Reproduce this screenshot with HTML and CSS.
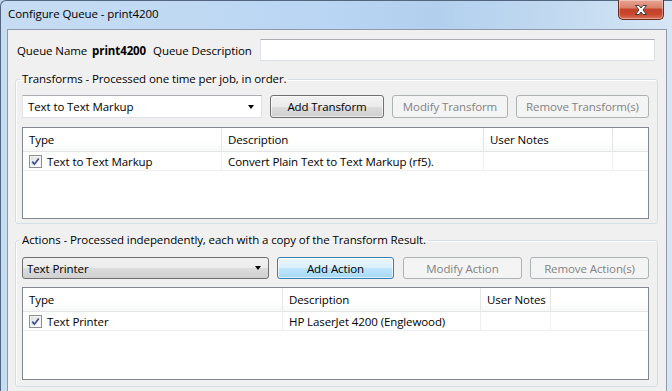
FILE: index.html
```html
<!DOCTYPE html>
<html>
<head>
<meta charset="utf-8">
<title>Configure Queue - print4200</title>
<link rel="stylesheet" href="styles.css">
</head>
<body>
<div class="window">
  <div class="titlebar">
    <span class="title">Configure Queue - print4200</span>
    <div class="close">
      <svg width="18" height="12" viewBox="0 0 18 12"><path d="M3.5 1.5 H7 L9 4 L11 1.5 H14.5 L11 6 L14.5 10.5 H11 L9 8 L7 10.5 H3.5 L7 6 Z" fill="#fff" stroke="#3b3b3b" stroke-width="1" stroke-linejoin="round"/></svg>
    </div>
  </div>
  <div class="client">
    <div class="queue-row">
      <span class="lbl">Queue Name</span>
      <span class="qname">print4200</span>
      <span class="lbl">Queue Description</span>
      <div class="textbox"></div>
    </div>

    <fieldset class="group group-transforms">
      <legend>Transforms - Processed one time per job, in order.</legend>
      <div class="toolbar">
        <div class="combo combo-edit w-t0"><span>Text to Text Markup</span><span class="arrow"></span></div>
        <div class="btn w-t1">Add Transform</div>
        <div class="btn disabled w-t2">Modify Transform</div>
        <div class="btn disabled w-t3">Remove Transform(s)</div>
      </div>
      <div class="list list-t">
        <div class="hcell">Type</div>
        <div class="hcell">Description</div>
        <div class="hcell">User Notes</div>
        <div class="hcell last"></div>
        <div class="cell"><span class="check"><svg width="9" height="9" viewBox="0 0 9 9"><path d="M1.2 4.6 L3.4 7.2 L7.8 1.4" fill="none" stroke="#3b4f94" stroke-width="1.7"/></svg></span>Text to Text Markup</div>
        <div class="cell">Convert Plain Text to Text Markup (rf5).</div>
        <div class="cell"></div>
        <div class="cell last"></div>
      </div>
    </fieldset>

    <fieldset class="group group-actions">
      <legend>Actions - Processed independently, each with a copy of the Transform Result.</legend>
      <div class="toolbar">
        <div class="combo combo-list w-a0"><span>Text Printer</span><span class="arrow"></span></div>
        <div class="btn focused w-a1">Add Action</div>
        <div class="btn disabled w-a2 ga">Modify Action</div>
        <div class="btn disabled w-a3">Remove Action(s)</div>
      </div>
      <div class="list list-a">
        <div class="hcell">Type</div>
        <div class="hcell">Description</div>
        <div class="hcell">User Notes</div>
        <div class="hcell last"></div>
        <div class="cell"><span class="check"><svg width="9" height="9" viewBox="0 0 9 9"><path d="M1.2 4.6 L3.4 7.2 L7.8 1.4" fill="none" stroke="#3b4f94" stroke-width="1.7"/></svg></span>Text Printer</div>
        <div class="cell">HP LaserJet 4200 (Englewood)</div>
        <div class="cell"></div>
        <div class="cell last"></div>
      </div>
    </fieldset>
  </div>
</div>
</body>
</html>
```
FILE: styles.css
```css
* { box-sizing: border-box; }
html, body { margin: 0; padding: 0; }
body {
  width: 672px;
  height: 391px;
  overflow: hidden;
  font-family: "Open Sans", "Noto Sans", sans-serif;
  font-size: 11.5px;
  letter-spacing: -0.1px;
  color: #000;
  background: #bcd6f1;
}
.window {
  height: 391px;
  display: flex;
  flex-direction: column;
  border-top: 1px solid #52677f;
  border-left: 1px solid #52677f;
  border-radius: 6px 0 0 0;
  background: linear-gradient(90deg, #c6dcf3 0%, #bfd9f3 30%, #b8d5f3 50%, #b2d0ee 65%, #c4dbf1 85%, #d6e6f5 100%);
}
.titlebar {
  height: 28px;
  display: flex;
  align-items: flex-start;
  padding-left: 7px;
}
.title {
  padding-top: 5px;
  line-height: 16px;
  color: #000;
}
.close {
  margin-left: auto;
  margin-right: 8px;
  margin-top: -1px;
  width: 46px;
  height: 20px;
  border: 1px solid #6e2a1f;
  border-top: none;
  border-radius: 0 0 5px 5px;
  background: linear-gradient(180deg, #e8a594 0%, #d9826c 40%, #c4412a 50%, #c8472d 75%, #d9735a 100%);
  display: flex;
  align-items: center;
  justify-content: center;
  box-shadow: inset 0 0 0 1px rgba(255,255,255,0.35);
}
.close svg { display: block; }
.client {
  flex: 1;
  margin: 0 5px 0 6px;
  background: #f0f0f0;
  border: 1px solid #8e9aac;
  border-bottom: none;
  display: flex;
  flex-direction: column;
}
.queue-row {
  display: flex;
  align-items: center;
  height: 22px;
  margin-top: 9px;
  padding: 0 11px 0 9px;
}
.lbl { white-space: nowrap; }
.qname { font-weight: bold; margin: 0 7px 0 5px; }
.textbox {
  flex: 1;
  height: 22px;
  margin-left: 8px;
  background: #fff;
  border: 1px solid #dbdfe6;
  border-top-color: #abadb3;
  border-left-color: #e2e3ea;
}
.group {
  margin: 0 8px 0 7px;
  padding: 8px 8px 4px 6px;
  border: 1px solid #d5dfe5;
  border-radius: 3px;
  box-shadow: inset 1px 1px 0 #fff;
  min-width: 0;
}
.group-transforms { margin-top: 10px; }
.group-actions { margin-top: 8px; padding-top: 9px; padding-bottom: 6px; }
legend {
  padding: 0 2px;
  margin-left: -2px;
  line-height: 16px;
  white-space: nowrap;
}
.toolbar {
  display: flex;
  gap: 8px;
  height: 23px;
}
.group-actions .toolbar { height: 22px; }
.ga { margin-left: 1px; }
.w-t0 { width: 240px; }
.w-t1 { width: 114px; }
.w-t2 { width: 116px; }
.w-t3 { width: 133px; }
.w-a0 { width: 247px; }
.w-a1 { width: 117px; }
.w-a2 { width: 119px; }
.w-a3 { width: 119px; }
.combo {
  display: flex;
  align-items: center;
  padding: 0 6px 0 5px;
  white-space: nowrap;
}
.combo span:first-child { flex: 1; }
.combo-edit {
  background: #fff;
  border: 1px solid #dde1e7;
  border-top-color: #abadb3;
  border-left-color: #e2e3ea;
}
.combo-list {
  border: 1px solid #707070;
  border-radius: 3px;
  background: linear-gradient(180deg, #f2f2f2 0%, #ebebeb 50%, #dddddd 51%, #cfcfcf 100%);
  padding-left: 4px;
}
.arrow {
  width: 0;
  height: 0;
  border-left: 3.5px solid transparent;
  border-right: 3.5px solid transparent;
  border-top: 4px solid #000;
  margin-right: 1px;
}
.btn {
  display: flex;
  align-items: center;
  justify-content: center;
  border: 1px solid #707070;
  border-radius: 3px;
  background: linear-gradient(180deg, #f2f2f2 0%, #ebebeb 50%, #dddddd 51%, #cfcfcf 100%);
  box-shadow: inset 0 0 0 1px rgba(255,255,255,0.6);
  white-space: nowrap;
}
.btn.disabled {
  border-color: #adb2b5;
  background: #f4f4f4;
  color: #838383;
  box-shadow: none;
}
.btn.focused {
  border-color: #3c7fb1;
  background: linear-gradient(180deg, #eaf6fd 0%, #d9f0fc 50%, #bee6fd 51%, #a7d9f5 100%);
}
.list {
  margin-top: 9px;
  height: 92px;
  background: #fff;
  border: 1px solid #828790;
  display: grid;
  grid-template-rows: 24px 19px;
  align-content: start;
}
.group-actions .list { margin-top: 8px; height: 93px; }
.list-t { grid-template-columns: 199px 262px 129px 1fr; }
.list-a { grid-template-columns: 260px 198px 70px 1fr; }
.hcell {
  display: flex;
  align-items: center;
  padding-left: 6px;
  border-right: 1px solid #e5e5e5;
  border-bottom: 1px solid #e5e5e5;
  background: linear-gradient(180deg, #ffffff 0%, #ffffff 60%, #f6f7f8 100%);
  white-space: nowrap;
}
.cell {
  display: flex;
  align-items: center;
  padding-left: 6px;
  border-right: 1px solid #f0f0f0;
  border-bottom: 1px solid #f0f0f0;
  white-space: nowrap;
}
.hcell.last, .cell.last { border-right: none; }
.check {
  width: 13px;
  height: 13px;
  border: 1px solid #8e8f8f;
  background: linear-gradient(135deg, #dcdcdc 0%, #f6f6f6 70%, #ffffff 100%);
  margin-right: 5px;
  display: flex;
  align-items: center;
  justify-content: center;
  box-shadow: inset 0 0 0 1px #f4f4f4;
}
.check svg { display: block; }
```
